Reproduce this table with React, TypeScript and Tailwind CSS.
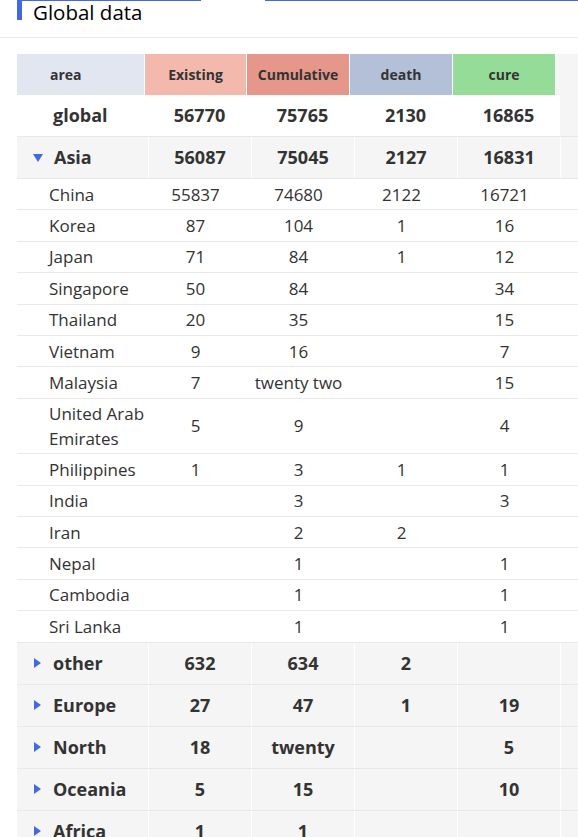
import React from "react";

type Row = {
  name: string;
  existing?: string;
  cumulative?: string;
  death?: string;
  cure?: string;
};

const asiaRows: Row[] = [
  { name: "China", existing: "55837", cumulative: "74680", death: "2122", cure: "16721" },
  { name: "Korea", existing: "87", cumulative: "104", death: "1", cure: "16" },
  { name: "Japan", existing: "71", cumulative: "84", death: "1", cure: "12" },
  { name: "Singapore", existing: "50", cumulative: "84", cure: "34" },
  { name: "Thailand", existing: "20", cumulative: "35", cure: "15" },
  { name: "Vietnam", existing: "9", cumulative: "16", cure: "7" },
  { name: "Malaysia", existing: "7", cumulative: "twenty two", cure: "15" },
  { name: "United Arab Emirates", existing: "5", cumulative: "9", cure: "4" },
  { name: "Philippines", existing: "1", cumulative: "3", death: "1", cure: "1" },
  { name: "India", cumulative: "3", cure: "3" },
  { name: "Iran", cumulative: "2", death: "2" },
  { name: "Nepal", cumulative: "1", cure: "1" },
  { name: "Cambodia", cumulative: "1", cure: "1" },
  { name: "Sri Lanka", cumulative: "1", cure: "1" },
];

const otherGroups: Row[] = [
  { name: "other", existing: "632", cumulative: "634", death: "2" },
  { name: "Europe", existing: "27", cumulative: "47", death: "1", cure: "19" },
  { name: "North", existing: "18", cumulative: "twenty", cure: "5" },
  { name: "Oceania", existing: "5", cumulative: "15", cure: "10" },
  { name: "Africa", existing: "1", cumulative: "1" },
];

const bodyCols = "grid grid-cols-[131px_103px_103px_103px_103px_1fr]";

function Caret({ open }: { open: boolean }) {
  return open ? (
    <svg width="10" height="8" viewBox="0 0 10 8" className="shrink-0">
      <path d="M0 0h10L5 8z" fill="#4169e1" />
    </svg>
  ) : (
    <svg width="7" height="10" viewBox="0 0 7 10" className="ml-[1px] shrink-0">
      <path d="M0 0l7 5-7 5z" fill="#4169e1" />
    </svg>
  );
}

function GroupRow({ row, open }: { row: Row; open: boolean }) {
  const cell = "flex items-center justify-center border-l border-white";
  return (
    <div className={`${bodyCols} h-[42px] border-b border-[#e9e9e9] bg-[#f5f5f5] text-[18px] font-bold`}>
      <div className={`flex items-center pl-4 ${open ? "gap-[11px]" : "gap-[12px]"}`}>
        <Caret open={open} />
        <span>{row.name}</span>
      </div>
      <div className={cell}>{row.existing}</div>
      <div className={cell}>{row.cumulative}</div>
      <div className={cell}>{row.death}</div>
      <div className={cell}>{row.cure}</div>
      <div className={cell} />
    </div>
  );
}

function ChildRow({ row }: { row: Row }) {
  const cell = "flex items-center justify-center pr-2";
  return (
    <div className={`${bodyCols} min-h-[31.4px] border-b border-[#e9e9e9] bg-white py-[2.25px] text-[17px] leading-[25px]`}>
      <div className="flex items-center pl-8">{row.name}</div>
      <div className={cell}>{row.existing}</div>
      <div className={cell}>{row.cumulative}</div>
      <div className={cell}>{row.death}</div>
      <div className={cell}>{row.cure}</div>
      <div />
    </div>
  );
}

export default function App() {
  return (
    <div className="h-[837px] w-[578px] overflow-hidden bg-white font-['Open_Sans',sans-serif] text-[#333]">
      <div className="relative h-[38px] border-b border-[#eaeaea]">
        <div className="absolute left-[17px] top-0 h-px w-[184px] bg-[#4169e1]" />
        <div className="absolute left-[265px] top-0 h-px w-[313px] bg-[#4169e1]" />
        <div className="flex items-start">
          <div className="ml-[17px] h-[20px] w-[5px] bg-[#4169e1]" />
          <h2 className="ml-[11px] text-[20.5px] leading-[24px] text-black">Global data</h2>
        </div>
      </div>

      <div className="ml-[17px] mt-[16px]">
        <div className="grid h-[41px] grid-cols-[127px_102px_103px_103px_103px_1fr] text-[14px] font-bold">
          <div className="flex items-center bg-[#e1e6f1] pl-[33px]">area</div>
          <div className="flex items-center justify-center border-l border-white bg-[#f2b9ac]">Existing</div>
          <div className="flex items-center justify-center border-l border-white bg-[#e5978a]">Cumulative</div>
          <div className="flex items-center justify-center border-l border-white bg-[#b4c0d7]">death</div>
          <div className="flex items-center justify-center border-l border-white bg-[#95dc98]">cure</div>
          <div className="border-l border-white bg-[#f5f5f5]" />
        </div>

        <div className={`${bodyCols} h-[42px] border-b border-[#e9e9e9] text-[18px] font-bold`}>
          <div className="flex items-center pl-9">global</div>
          <div className="flex items-center justify-center">56770</div>
          <div className="flex items-center justify-center">75765</div>
          <div className="flex items-center justify-center">2130</div>
          <div className="flex items-center justify-center">16865</div>
          <div className="bg-[#f5f5f5]" />
        </div>

        <GroupRow
          open
          row={{ name: "Asia", existing: "56087", cumulative: "75045", death: "2127", cure: "16831" }}
        />
        {asiaRows.map((r) => (
          <ChildRow key={r.name} row={r} />
        ))}
        {otherGroups.map((r) => (
          <GroupRow key={r.name} row={r} open={false} />
        ))}
      </div>
    </div>
  );
}
